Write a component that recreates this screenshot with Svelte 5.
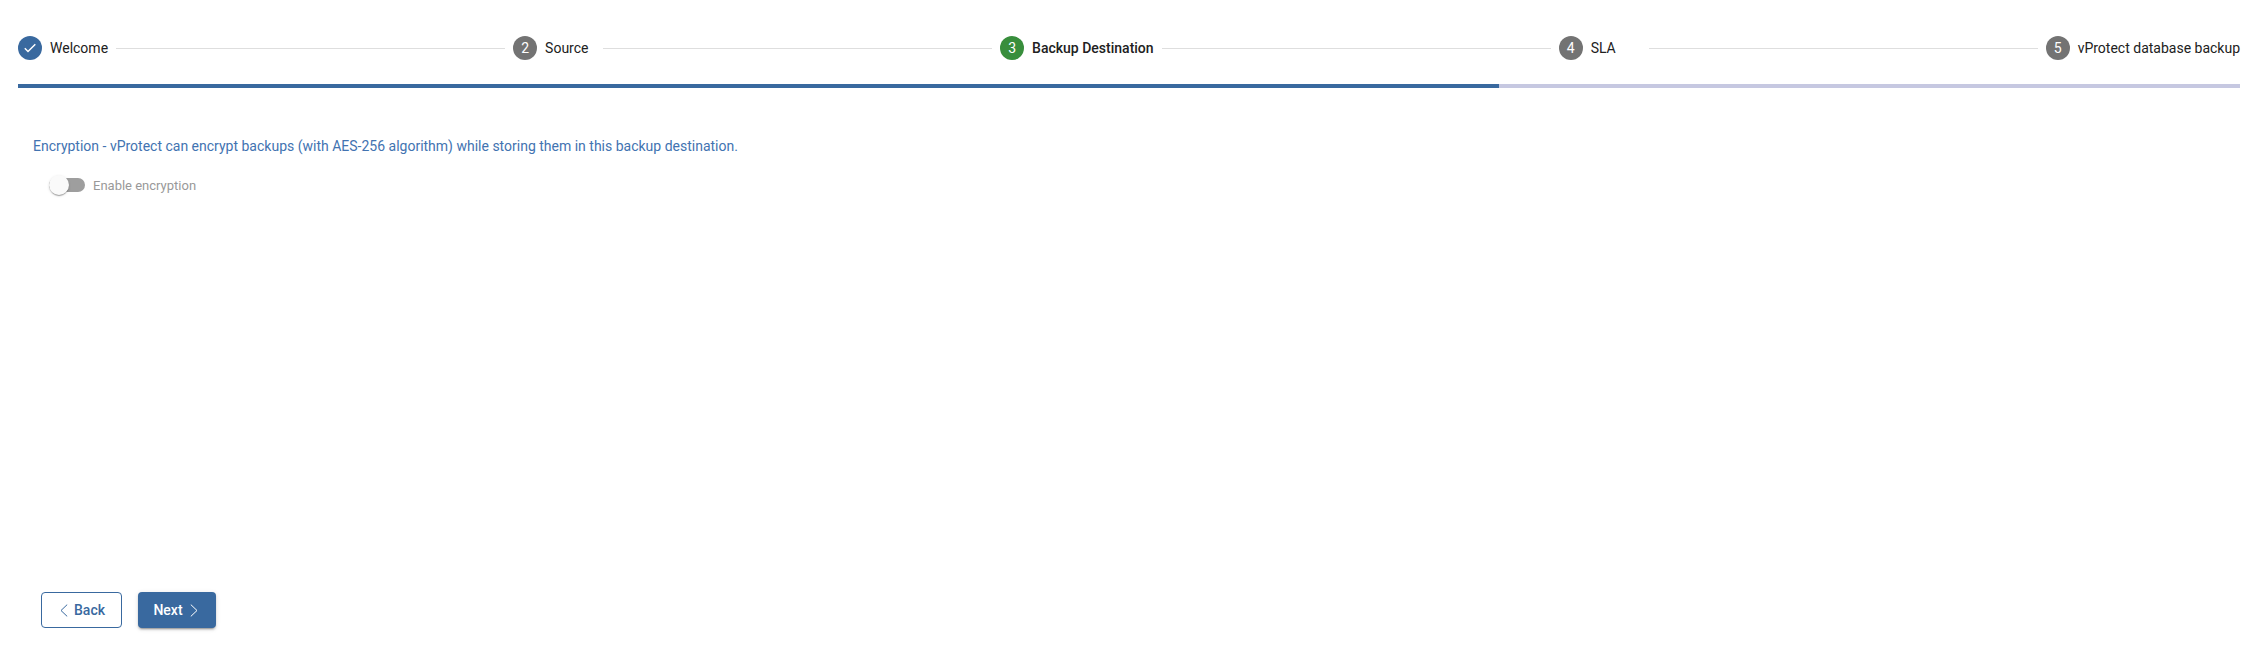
<script>
  const steps = [
    { n: 1, label: 'Welcome', state: 'done' },
    { n: 2, label: 'Source', state: 'todo' },
    { n: 3, label: 'Backup Destination', state: 'current' },
    { n: 4, label: 'SLA', state: 'todo' },
    { n: 5, label: 'vProtect database backup', state: 'todo' }
  ];
  const progress = 66.67;
  let encrypted = $state(false);
</script>

<main>
  <header>
    {#each steps as step, i}
      {#if i > 0}<span class="line"></span>{/if}
      <div class="step {step.state}">
        <span class="badge">
          {#if step.state === 'done'}
            <svg width="12" height="10" viewBox="0 0 12 10"><path d="M.8 5.3 4 8.5 11.3 1.2" fill="none" stroke="#fff" stroke-width="1.5" /></svg>
          {:else}{step.n}{/if}
        </span>
        <span class="label">{step.label}</span>
      </div>
    {/each}
  </header>
  <div class="progress"><div class="fill" style="width: {progress}%"></div></div>

  <section>
    <p>Encryption - vProtect can encrypt backups (with AES-256 algorithm) while storing them in this backup destination.</p>
    <button class="toggle" class:on={encrypted} role="switch" aria-checked={encrypted} onclick={() => (encrypted = !encrypted)}>
      <span class="track"><span class="thumb"></span></span>
      <span class="toggle-label">Enable encryption</span>
    </button>
  </section>

  <footer>
    <button class="btn back">
      <svg width="8" height="13" viewBox="0 0 8 13"><path d="M7.2 .6 1 6.5l6.2 5.9" fill="none" stroke="currentColor" /></svg>
      <span>Back</span>
    </button>
    <button class="btn next">
      <span>Next</span>
      <svg width="8" height="13" viewBox="0 0 8 13"><path d="M.8 .6 7 6.5.8 12.4" fill="none" stroke="currentColor" /></svg>
    </button>
  </footer>
</main>

<style>
  :global(body) { background: #fff; }
  main {
    box-sizing: border-box;
    height: 665px;
    padding: 36px 21px 37px 18px;
    display: flex;
    flex-direction: column;
    font-family: Roboto, sans-serif;
    font-size: 14px;
    color: #212121;
  }
  header { display: flex; align-items: center; height: 24px; gap: 8px; }
  .line { flex: 1; height: 1px; margin-top: 1px; background: #dedede; }
  .step { display: flex; align-items: center; gap: 8px; white-space: nowrap; }
  .badge {
    width: 24px;
    height: 24px;
    border-radius: 50%;
    display: flex;
    align-items: center;
    justify-content: center;
    background: #737373;
    color: #fff;
  }
  .done .badge { background: #39699f; }
  .current .badge { background: #388e3c; }
  .label { min-width: 50px; line-height: 24px; }
  .current .label { font-weight: 500; }
  .progress { margin-top: 24px; height: 4px; background: #c6c8e1; }
  .fill { height: 4px; background: #39699f; }
  section { flex: 1; padding: 46px 15px 0; }
  p { margin: 0; line-height: 24px; color: #4273b1; }
  button { font: inherit; border: 0; cursor: pointer; }
  .toggle {
    display: flex;
    align-items: center;
    gap: 8px;
    margin: 15px 0 0 16px;
    padding: 0;
    height: 24px;
    background: none;
  }
  .track {
    display: flex;
    align-items: center;
    width: 36px;
    height: 14px;
    border-radius: 8px;
    background: #9e9e9e;
  }
  .thumb {
    width: 20px;
    height: 20px;
    flex: none;
    border-radius: 50%;
    background: #fafafa;
    box-shadow: 0 2px 1px -1px rgba(0, 0, 0, 0.2), 0 1px 1px rgba(0, 0, 0, 0.14), 0 1px 3px rgba(0, 0, 0, 0.12);
  }
  .on .thumb { margin-left: 16px; }
  .toggle-label { font-size: 13px; color: #999; }
  footer { display: flex; gap: 16px; padding-left: 23px; }
  .btn {
    box-sizing: border-box;
    height: 36px;
    display: flex;
    align-items: center;
    justify-content: center;
    gap: 7px;
    padding: 0;
    border-radius: 4px;
    font-weight: 500;
  }
  .btn svg { margin-top: 1px; }
  .back { width: 81px; background: #fff; border: 1px solid #39699f; color: #39699f; padding-left: 2px; gap: 6px; }
  .next {
    width: 78px;
    background: #39699f;
    color: #fff;
    padding-right: 3px;
    box-shadow: 0 3px 1px -2px rgba(0, 0, 0, 0.2), 0 2px 2px rgba(0, 0, 0, 0.14), 0 1px 5px rgba(0, 0, 0, 0.12);
  }
</style>
